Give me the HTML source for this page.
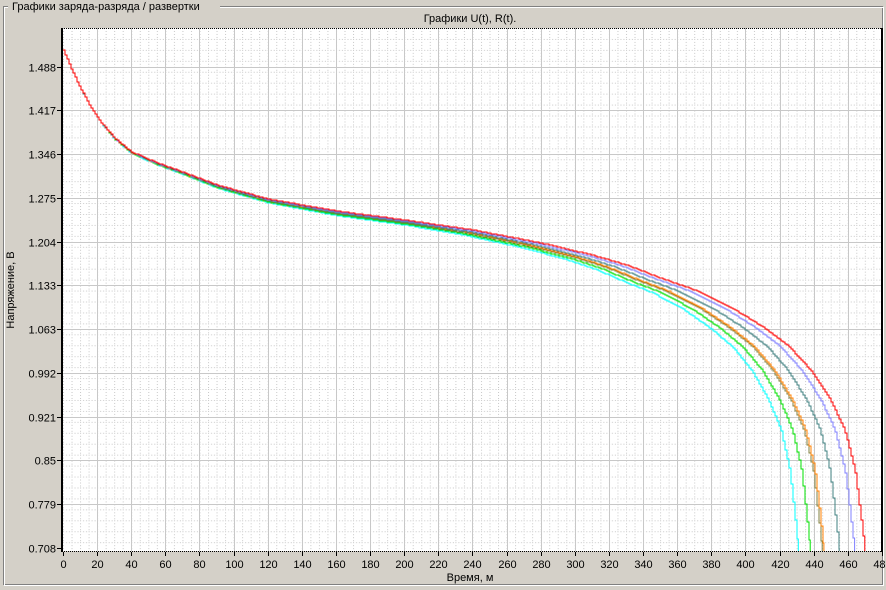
<!DOCTYPE html>
<html><head><meta charset="utf-8"><style>
body{margin:0;width:886px;height:590px;background:#d4d0c8;overflow:hidden;font-family:"Liberation Sans",sans-serif;}
svg{position:absolute;left:0;top:0}
text{font-family:"Liberation Sans",sans-serif;font-size:11px;fill:#000}
</style></head><body>
<svg id="s" width="886" height="590" xmlns="http://www.w3.org/2000/svg">
<defs>
<pattern id="minor" x="63" y="28" width="8.53" height="10.94" patternUnits="userSpaceOnUse">
<line x1="0.5" y1="0" x2="0.5" y2="10.94" stroke="#c8c8c8" stroke-dasharray="1,2"/>
<line x1="0" y1="0.5" x2="8.53" y2="0.5" stroke="#c8c8c8" stroke-dasharray="1,2"/>
</pattern>
</defs>
<polyline points="8,6.5 3.5,6.5 3.5,584.5 882.5,584.5 882.5,6.5 220,6.5" fill="none" stroke="#808080"/>
<polyline points="8,7.5 4.5,7.5 4.5,585.5 883.5,585.5 883.5,7.5 220,7.5" fill="none" stroke="#fff"/>
<text x="12" y="10">Графики заряда-разряда / развертки</text>
<text x="470" y="22" text-anchor="middle">Графики U(t), R(t).</text>
<rect x="63" y="28" width="819" height="523" fill="#fff"/>
<rect x="63" y="28" width="819" height="523" fill="url(#minor)"/>
<g id="grid" stroke="#c8c8c8" stroke-width="1"></g>
<g id="curves" fill="none" stroke-width="1"></g>
<line x1="62" y1="28" x2="62" y2="552" stroke="#000" stroke-width="2"/>
<line x1="62" y1="28.5" x2="882" y2="28.5" stroke="#000" stroke-dasharray="1,1"/>
<line x1="62" y1="551.5" x2="882" y2="551.5" stroke="#000" stroke-dasharray="1,1"/>
<line x1="882" y1="28" x2="882" y2="552" stroke="#000" stroke-width="2"/>
<g id="labels"></g>
<text x="470" y="581" text-anchor="middle">Время, м</text>
<text transform="translate(14,290) rotate(-90)" text-anchor="middle">Напряжение, В</text>
</svg>
<script>
var ns="http://www.w3.org/2000/svg";
function el(p,t,a,txt){var e=document.createElementNS(ns,t);for(var k in a)e.setAttribute(k,a[k]);if(txt!=null)e.textContent=txt;p.appendChild(e);return e;}
var g=document.getElementById('grid'),L=document.getElementById('labels'),C=document.getElementById('curves');
var sx=1.706;
for(var i=0;i<=24;i++){var x=Math.round(63+i*20*sx)+0.5;
 if(i>0&&i<24)el(g,'line',{x1:x,y1:28,x2:x,y2:551});
 el(L,'line',{x1:x,y1:552,x2:x,y2:556,stroke:'#000'});
 el(L,'text',{x:x,y:568,'text-anchor':'middle'},String(i*20));}
var ys=[1.488,1.417,1.346,1.275,1.204,1.133,1.063,0.992,0.921,0.85,0.779,0.708];
for(var j=0;j<12;j++){var y=Math.round(66.7+j*43.75)+0.5;
 if(j<11)el(g,'line',{x1:63,y1:y,x2:882,y2:y});
 el(L,'line',{x1:57,y1:y,x2:62,y2:y,stroke:'#000'});
 el(L,'text',{x:56,y:y+4,'text-anchor':'end'},String(ys[j]));}
var base=[[0,50],[5,70],[10,88],[16,107],[22,122],[30,138],[40,152],[55,163],[70,172],[90,185],[120,199],[160,211],[200,220],[240,230],[280,243],[310,255],[330,265],[350,278],[370,290],[391,307],[410,327],[425,346],[438,370],[449.6,400],[458,430],[464,470],[467,510],[470,551]];
function yat(t){for(var k=1;k<base.length;k++){if(t<=base[k][0]){var a=base[k-1],b=base[k];return a[1]+(b[1]-a[1])*(t-a[0])/(b[0]-a[0]);}}return 551;}
var cs=[['#00ffff',431,5],['#00e000',438,4],['#808040',445,3],['#ff8000',446,2],['#408080',455,2],['#8080ff',464,1],['#ff0000',470,0]];
var t0=200;
cs.forEach(function(c){var T=c[1],pts=[],py=null;
 for(var px=63;px<=63+T*sx;px+=2){var t=(px-63)/sx;
  var s=t<t0?t:t0+(t-t0)*(470-t0)/(T-t0);
  var y=yat(s)+Math.sin(Math.min(1,t/T)*Math.PI)*c[2]*(t>30?1:t/30);
  y=Math.round(y);
  if(py!==null)pts.push(px+','+py);pts.push(px+','+y);py=y;}
 var xe=63+T*sx;pts.push(xe.toFixed(1)+','+py);pts.push(xe.toFixed(1)+',551');
 el(C,'polyline',{points:pts.join(' '),stroke:c[0]});});
</script>
</body></html>
